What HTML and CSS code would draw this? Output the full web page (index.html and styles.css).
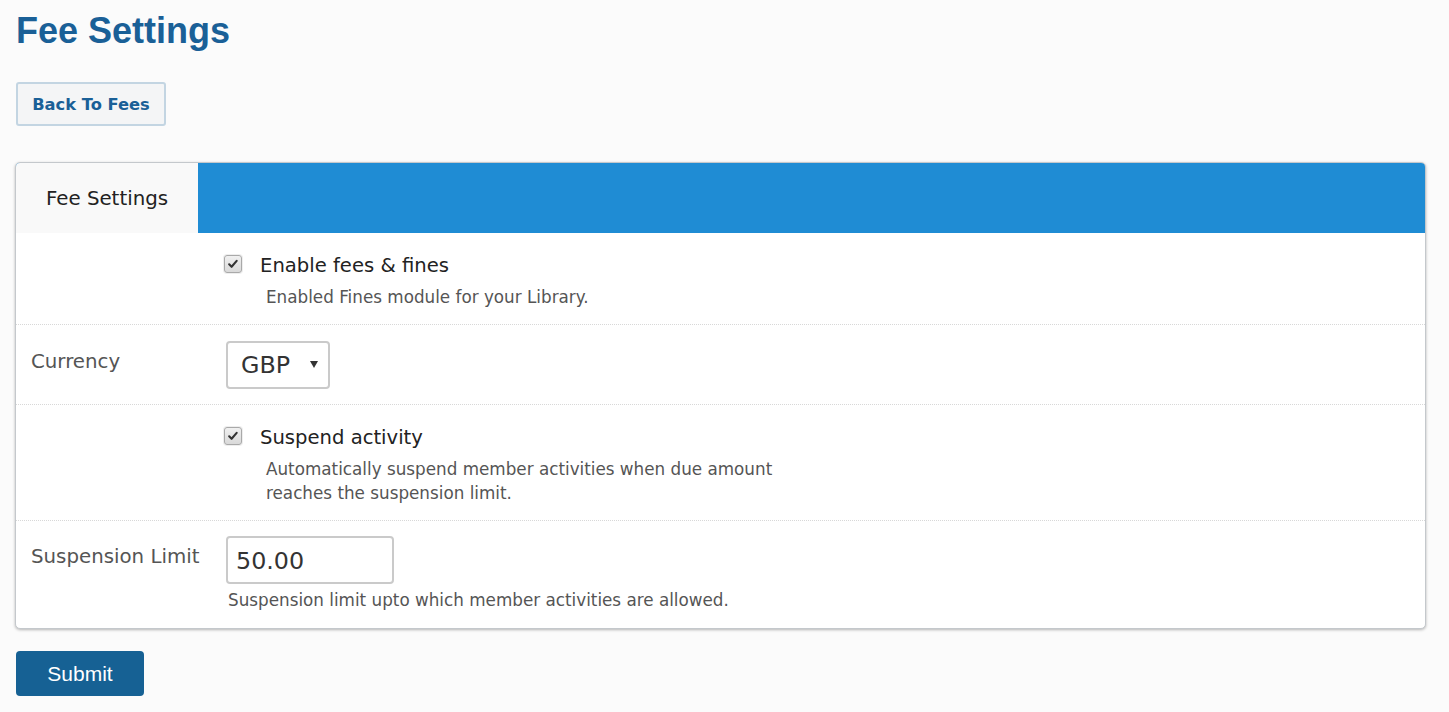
FILE: index.html
```html
<!DOCTYPE html>
<html>
<head>
<meta charset="utf-8">
<title>Fee Settings</title>
<link rel="stylesheet" href="styles.css">
</head>
<body>
  <h1 class="page-title">Fee Settings</h1>
  <div class="toolbar">
    <button class="btn-back" type="button">Back To Fees</button>
  </div>

  <div class="panel">
    <div class="panel-head">
      <div class="tab">Fee Settings</div>
    </div>

    <div class="row row-check">
      <div class="label"></div>
      <div class="control">
        <div class="check-line">
          <span class="checkbox"><svg viewBox="0 0 16 16" width="16" height="16"><path d="M3.6 8.4 L6.4 11.2 L12.2 4.4" fill="none" stroke="#333" stroke-width="2.4" stroke-linecap="round" stroke-linejoin="round"/></svg></span>
          <span class="check-label">Enable fees &amp; fines</span>
        </div>
        <div class="desc">Enabled Fines module for your Library.</div>
      </div>
    </div>

    <div class="row row-field">
      <div class="label">Currency</div>
      <div class="control">
        <div class="select">
          <span class="select-value">GBP</span>
          <svg class="select-arrow" viewBox="0 0 8 7" width="8" height="7"><path d="M0 0 H8 L4 7 Z" fill="#333"/></svg>
        </div>
      </div>
    </div>

    <div class="row row-check">
      <div class="label"></div>
      <div class="control">
        <div class="check-line">
          <span class="checkbox"><svg viewBox="0 0 16 16" width="16" height="16"><path d="M3.6 8.4 L6.4 11.2 L12.2 4.4" fill="none" stroke="#333" stroke-width="2.4" stroke-linecap="round" stroke-linejoin="round"/></svg></span>
          <span class="check-label">Suspend activity</span>
        </div>
        <div class="desc">Automatically suspend member activities when due amount reaches the suspension limit.</div>
      </div>
    </div>

    <div class="row row-field row-last">
      <div class="label">Suspension Limit</div>
      <div class="control">
        <div class="text-input">50.00</div>
        <div class="help">Suspension limit upto which member activities are allowed.</div>
      </div>
    </div>
  </div>

  <div class="actions">
    <button class="btn-submit" type="button">Submit</button>
  </div>
</body>
</html>
```

FILE: styles.css
```css
html, body {
  margin: 0;
  padding: 0;
  background: #fbfbfb;
}
body {
  padding: 11px 23px 0 16px;
  font-family: "DejaVu Sans", Verdana, sans-serif;
  color: #222;
}
.page-title {
  margin: 0;
  font-family: "Liberation Sans", Arial, sans-serif;
  font-weight: bold;
  font-size: 36px;
  line-height: 40px;
  color: #1a6097;
}
.toolbar {
  margin-top: 31px;
}
.btn-back {
  display: block;
  height: 44px;
  width: 150px;
  padding: 0;
  border: 2px solid #c3d5e2;
  border-radius: 3px;
  background: #f4f5f6;
  font-family: "DejaVu Sans", Verdana, sans-serif;
  font-weight: bold;
  font-size: 16.3px;
  color: #1a6097;
  text-align: center;
}
.panel {
  margin-top: 36px;
  margin-left: -1px;
  background: #fff;
  border: 1px solid #c4c8cc;
  border-radius: 5px;
  box-shadow: 0 1px 3px rgba(0,0,0,0.28);
  overflow: hidden;
}
.panel-head {
  display: flex;
  height: 70px;
  background: #1f8cd4;
}
.tab {
  display: flex;
  align-items: center;
  justify-content: center;
  width: 182px;
  background: #f9f9f9;
  font-size: 19.8px;
  color: #222;
}
.row {
  display: grid;
  grid-template-columns: 195px 1fr;
  padding: 0 15px;
  border-bottom: 1px dotted #d8d8d8;
}
.row-check {
  padding-top: 17px;
  padding-bottom: 15px;
}
.row-field {
  padding-top: 16px;
  padding-bottom: 15px;
}
.row-last {
  border-bottom: none;
  padding-top: 15px;
  padding-bottom: 16px;
}
.label {
  margin-top: 6px;
  font-size: 19.8px;
  line-height: 30px;
  color: #555;
}
.check-line {
  display: flex;
  align-items: center;
  height: 30px;
}
.checkbox {
  display: flex;
  align-items: center;
  justify-content: center;
  box-sizing: border-box;
  width: 18px;
  height: 18px;
  margin-left: -2px;
  margin-top: -3px;
  border: 1px solid #a9a9a9;
  border-radius: 3px;
  background: linear-gradient(#f0f0f0, #d9d9d9);
  box-shadow: 0 0 0 1px #eeeeee;
}
.checkbox svg {
  width: 14px;
  height: 14px;
}
.check-label {
  margin-left: 18px;
  font-size: 19.6px;
  color: #222;
}
.desc {
  margin-top: 5px;
  margin-left: 40px;
  max-width: 530px;
  font-size: 16.8px;
  line-height: 24px;
  color: #555;
}
.select {
  display: flex;
  align-items: center;
  box-sizing: border-box;
  width: 104px;
  height: 48px;
  padding: 0 10px 0 13px;
  border: 2px solid #cacaca;
  border-radius: 4px;
  background: #fff;
}
.select-value {
  flex: 1;
  font-size: 23.8px;
  color: #333;
}
.select-arrow {
  margin-top: -2px;
}
.text-input {
  box-sizing: border-box;
  width: 168px;
  height: 48px;
  padding: 1px 8px 0;
  border: 2px solid #cacaca;
  border-radius: 4px;
  font-size: 23.8px;
  line-height: 45px;
  color: #333;
}
.help {
  margin-top: 4px;
  margin-left: 2px;
  font-size: 16.8px;
  line-height: 24px;
  color: #555;
}
.actions {
  margin-top: 22px;
}
.btn-submit {
  display: block;
  width: 128px;
  height: 45px;
  padding: 0;
  border: none;
  border-radius: 4px;
  background: #166194;
  font-family: "Liberation Sans", Arial, sans-serif;
  font-size: 21px;
  color: #fff;
}
```
